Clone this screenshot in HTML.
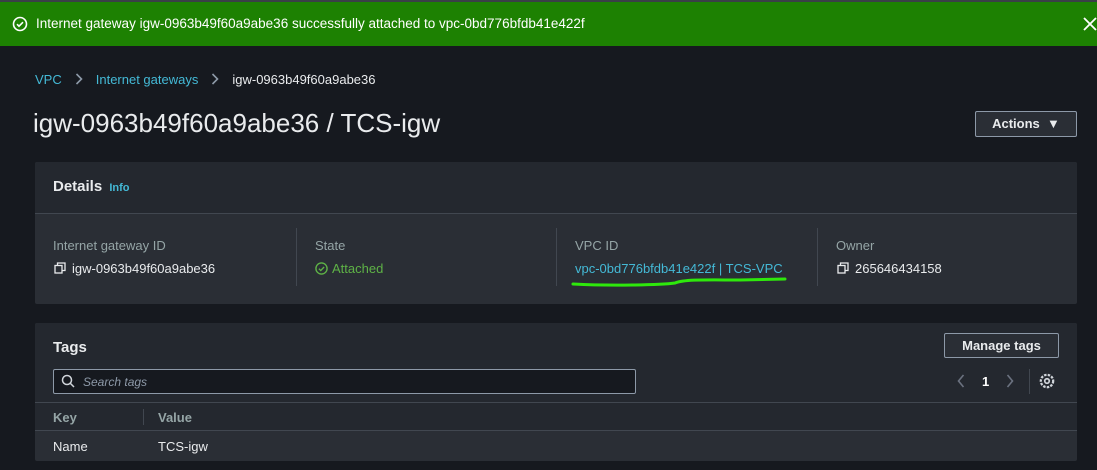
<!DOCTYPE html>
<html><head><meta charset="utf-8"><style>
*{box-sizing:border-box;margin:0;padding:0}
body{width:1097px;height:470px;overflow:hidden;background:#16191f;font-family:"Liberation Sans",sans-serif;color:#d1d5db;position:relative}
.abs{position:absolute}
.banner{left:0;top:0;width:1097px;height:46px;background:#1d8102;border-top:2px solid #3a3f47;color:#fff;font-size:13.5px}
.lnk{color:#44b9d6}
.card{background:#2a2e35;border-radius:2px}
.lbl{font-size:13px;color:#95a5a6}
.val{font-size:13px;color:#e9ebed}
.sep{width:1px;background:#414750}
.btn{border:1px solid #8d99a8;background:#2a2e35;color:#e9ebed;font-weight:bold;font-size:13px;text-align:center;border-radius:2px}
</style></head><body>
<div class="abs banner">
 <svg class="abs" style="left:12px;top:14px" width="16" height="16" viewBox="0 0 16 16"><circle cx="8" cy="8" r="6.5" fill="none" stroke="#fff" stroke-width="1.6"/><path d="M5 8.2l2 2 4-4" fill="none" stroke="#fff" stroke-width="1.6"/></svg>
 <div class="abs" style="left:36px;top:14px">Internet gateway igw-0963b49f60a9abe36 successfully attached to vpc-0bd776bfdb41e422f</div>
 <svg class="abs" style="left:1083px;top:15px" width="14" height="14" viewBox="0 0 14 14"><path d="M1 1l12 12M13 1L1 13" stroke="#fff" stroke-width="1.8"/></svg>
</div>
<div class="abs" style="left:35px;top:72px;font-size:13px;white-space:nowrap"><span class="lnk">VPC</span><svg style="margin:0 13px 0 13px;vertical-align:-1px" width="8" height="12" viewBox="0 0 8 12"><path d="M1.5 1l5 5-5 5" fill="none" stroke="#8d99a8" stroke-width="1.6"/></svg><span class="lnk">Internet gateways</span><svg style="margin:0 13px 0 13px;vertical-align:-1px" width="8" height="12" viewBox="0 0 8 12"><path d="M1.5 1l5 5-5 5" fill="none" stroke="#8d99a8" stroke-width="1.6"/></svg><span style="color:#e9ebed">igw-0963b49f60a9abe36</span></div>
<div class="abs" style="left:33px;top:108px;font-size:26px;color:#e9ebed">igw-0963b49f60a9abe36 / TCS-igw</div>
<div class="abs btn" style="left:975px;top:111px;width:102px;height:26px;line-height:24px">Actions &nbsp;&#9660;</div>

<div class="abs card" style="left:35px;top:162px;width:1042px;height:142px;overflow:hidden">
 <div style="height:52px;background:#24282f;border-bottom:1px solid #414750"></div>
</div>
<div class="abs" style="left:53px;top:178px;font-size:15px;font-weight:bold;color:#e9ebed">Details <span class="lnk" style="font-size:11px;margin-left:3px">Info</span></div>
<div class="abs lbl" style="left:53px;top:238px">Internet gateway ID</div>
<svg class="abs" style="left:54px;top:262px" width="12" height="12" viewBox="0 0 12 12"><rect x="1" y="3.5" width="7" height="7.5" fill="none" stroke="#e9ebed" stroke-width="1.3"/><path d="M3.5 3.5V1h7.5v7.5H8" fill="none" stroke="#e9ebed" stroke-width="1.3"/></svg>
<div class="abs val" style="left:72px;top:261px">igw-0963b49f60a9abe36</div>
<div class="abs sep" style="left:296px;top:228px;height:58px"></div>
<div class="abs lbl" style="left:315px;top:238px">State</div>
<svg class="abs" style="left:315px;top:262px" width="13" height="13" viewBox="0 0 14 14"><circle cx="7" cy="7" r="6" fill="none" stroke="#5eb246" stroke-width="1.5"/><path d="M4.2 7.2l2 2 3.6-3.8" fill="none" stroke="#5eb246" stroke-width="1.5"/></svg>
<div class="abs val" style="left:332px;top:261px;color:#5eb246">Attached</div>
<div class="abs sep" style="left:556px;top:228px;height:58px"></div>
<div class="abs lbl" style="left:575px;top:238px">VPC ID</div>
<div class="abs lnk" style="left:575px;top:261px;font-size:13px">vpc-0bd776bfdb41e422f | TCS-VPC</div>
<svg class="abs" style="left:570px;top:275px" width="220" height="14"><path d="M3 9C40 11 90 10 105 8 C115 4 140 5 170 5 L215 4" fill="none" stroke="#2ee80c" stroke-width="3" stroke-linecap="round"/></svg>
<div class="abs sep" style="left:817px;top:228px;height:58px"></div>
<div class="abs lbl" style="left:836px;top:238px">Owner</div>
<svg class="abs" style="left:837px;top:262px" width="12" height="12" viewBox="0 0 12 12"><rect x="1" y="3.5" width="7" height="7.5" fill="none" stroke="#e9ebed" stroke-width="1.3"/><path d="M3.5 3.5V1h7.5v7.5H8" fill="none" stroke="#e9ebed" stroke-width="1.3"/></svg>
<div class="abs val" style="left:855px;top:261px">265646434158</div>

<div class="abs card" style="left:35px;top:323px;width:1042px;height:138px;overflow:hidden">
 <div style="height:80px;background:#24282f;border-bottom:1px solid #414750"></div>
 <div style="height:28px;background:#24282f;border-bottom:1px solid #414750"></div>
</div>
<div class="abs" style="left:53px;top:339px;font-size:15px;font-weight:bold;color:#e9ebed">Tags</div>
<div class="abs btn" style="left:944px;top:333px;width:115px;height:25px;line-height:23px">Manage tags</div>
<div class="abs" style="left:53px;top:369px;width:583px;height:25px;border:1px solid #8d99a8;background:#16191f;border-radius:2px"></div>
<svg class="abs" style="left:61px;top:374px" width="14" height="14" viewBox="0 0 14 14"><circle cx="6" cy="6" r="4.5" fill="none" stroke="#d1d5db" stroke-width="1.5"/><path d="M9.5 9.5L13 13" stroke="#d1d5db" stroke-width="1.5"/></svg>
<div class="abs" style="left:83px;top:375px;font-size:12px;font-style:italic;color:#8d99a8">Search tags</div>
<svg class="abs" style="left:957px;top:374px" width="8" height="14" viewBox="0 0 8 14"><path d="M6.5 1l-5 6 5 6" fill="none" stroke="#6b7280" stroke-width="1.6"/></svg>
<div class="abs" style="left:982px;top:374px;font-size:13px;font-weight:bold;color:#fff">1</div>
<svg class="abs" style="left:1006px;top:374px" width="8" height="14" viewBox="0 0 8 14"><path d="M1.5 1l5 6-5 6" fill="none" stroke="#6b7280" stroke-width="1.6"/></svg>
<div class="abs sep" style="left:1029px;top:369px;height:25px"></div>
<svg class="abs" style="left:1038px;top:372px" width="18" height="18" viewBox="0 0 16 16"><circle cx="8" cy="8" r="5.5" fill="none" stroke="#d1d5db" stroke-width="2" stroke-dasharray="2.2 1.1"/><circle cx="8" cy="8" r="2" fill="none" stroke="#d1d5db" stroke-width="1.5"/></svg>
<div class="abs" style="left:53px;top:410px;font-size:13px;font-weight:bold;color:#95a5a6">Key</div>
<div class="abs sep" style="left:143px;top:409px;height:16px"></div>
<div class="abs" style="left:158px;top:410px;font-size:13px;font-weight:bold;color:#95a5a6">Value</div>
<div class="abs val" style="left:53px;top:439px">Name</div>
<div class="abs val" style="left:158px;top:439px">TCS-igw</div>
</body></html>
